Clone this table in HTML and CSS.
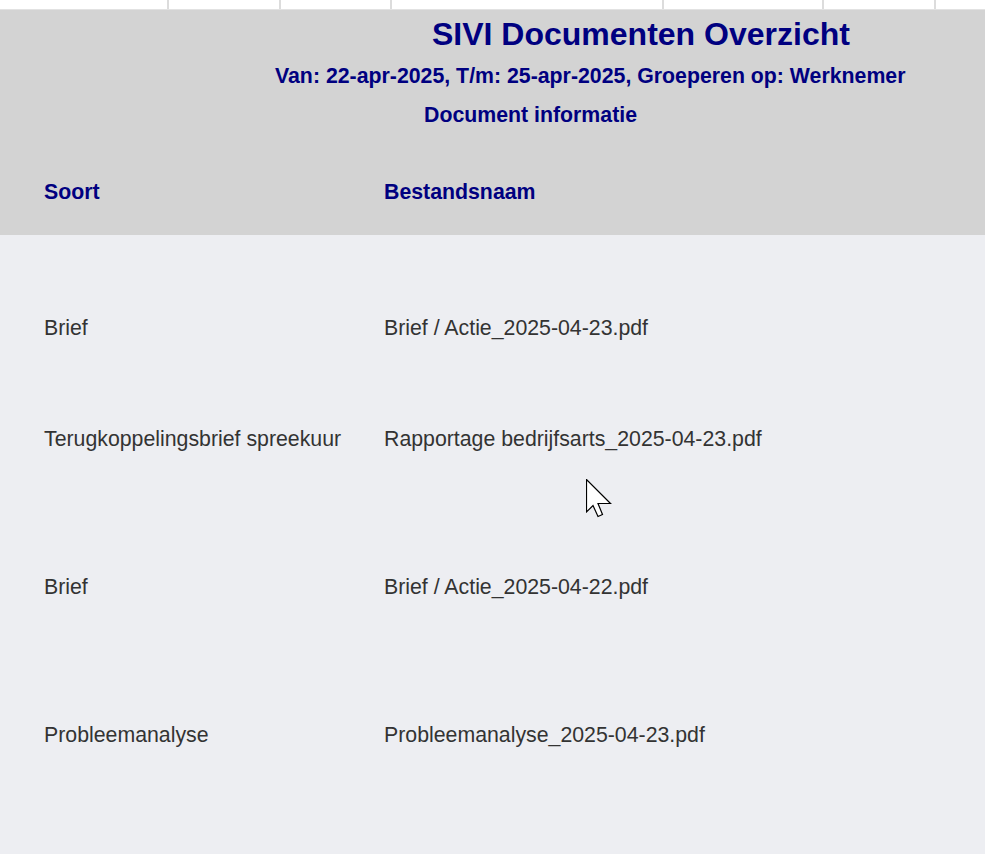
FILE: index.html
```html
<!DOCTYPE html>
<html lang="nl">
<head>
<meta charset="utf-8">
<title>SIVI Documenten Overzicht</title>
<link rel="stylesheet" href="styles.css">
</head>
<body>
<div class="page">
  <div class="strip">
    <div class="cell c1"></div>
    <div class="cell c2"></div>
    <div class="cell c3"></div>
    <div class="cell c4"></div>
    <div class="cell c5"></div>
    <div class="cell c6"></div>
    <div class="cell c7"></div>
  </div>
  <div class="header">
    <h1 class="title">SIVI Documenten Overzicht</h1>
    <div class="subtitle">Van: 22-apr-2025, T/m: 25-apr-2025, Groeperen op: Werknemer</div>
    <div class="section">Document informatie</div>
    <div class="cols">
      <div class="col-a">Soort</div>
      <div class="col-b">Bestandsnaam</div>
    </div>
  </div>
  <div class="rows">
    <div class="row r1"><div class="col-a">Brief</div><div class="col-b">Brief / Actie_2025-04-23.pdf</div></div>
    <div class="row r2"><div class="col-a">Terugkoppelingsbrief spreekuur</div><div class="col-b">Rapportage bedrijfsarts_2025-04-23.pdf</div></div>
    <div class="row r3"><div class="col-a">Brief</div><div class="col-b">Brief / Actie_2025-04-22.pdf</div></div>
    <div class="row r4"><div class="col-a">Probleemanalyse</div><div class="col-b">Probleemanalyse_2025-04-23.pdf</div></div>
  </div>
  <svg class="cursor" width="28" height="40" viewBox="0 0 28 40">
    <path d="M0.5 0.5 L0.5 33 L7 26.5 L12 37.5 L16.5 35.5 L12 24.5 L24.5 24.5 Z" fill="#fff" stroke="#000" stroke-width="1.2" stroke-linejoin="miter"/>
  </svg>
</div>
</body>
</html>
```

FILE: styles.css
```css
html, body {
  margin: 0;
  padding: 0;
  background: #edeef2;
}
.page {
  position: relative;
  width: 985px;
  min-height: 854px;
  font-family: "Liberation Sans", Arial, sans-serif;
}
.strip {
  display: flex;
  height: 9px;
  background: #ffffff;
  border-bottom: 1px solid #e2e2e2;
}
.cell {
  height: 100%;
  border-right: 2px solid #dcdcdc;
  box-sizing: border-box;
}
.c1 { width: 169px; }
.c2 { width: 112px; }
.c3 { width: 111px; }
.c4 { width: 272px; }
.c5 { width: 160px; }
.c6 { width: 112px; }
.c7 { flex: 1; border-right: none; }
.header {
  background: #d3d3d3;
  height: 225px;
  box-sizing: border-box;
  color: #000080;
  padding-top: 6px;
}
.title {
  margin: 0;
  font-size: 32px;
  font-weight: bold;
  line-height: 36px;
  padding-left: 432px;
}
.subtitle {
  font-size: 21.3px;
  font-weight: bold;
  line-height: 26px;
  margin-top: 11px;
  padding-left: 275px;
}
.section {
  font-size: 21.3px;
  font-weight: bold;
  line-height: 26px;
  margin-top: 13px;
  padding-left: 424px;
}
.cols {
  display: flex;
  font-size: 21.3px;
  font-weight: bold;
  line-height: 26px;
  margin-top: 51px;
}
.col-a {
  width: 340px;
  padding-left: 44px;
}
.col-b {
  flex: 1;
}
.rows {
  color: #333333;
  font-size: 21.3px;
  line-height: 26px;
}
.row {
  display: flex;
}
.r1 { padding-top: 80px; }
.r2 { padding-top: 85px; }
.r3 { padding-top: 122px; }
.r4 { padding-top: 122px; }
.cursor {
  position: absolute;
  left: 586px;
  top: 479px;
}
```
